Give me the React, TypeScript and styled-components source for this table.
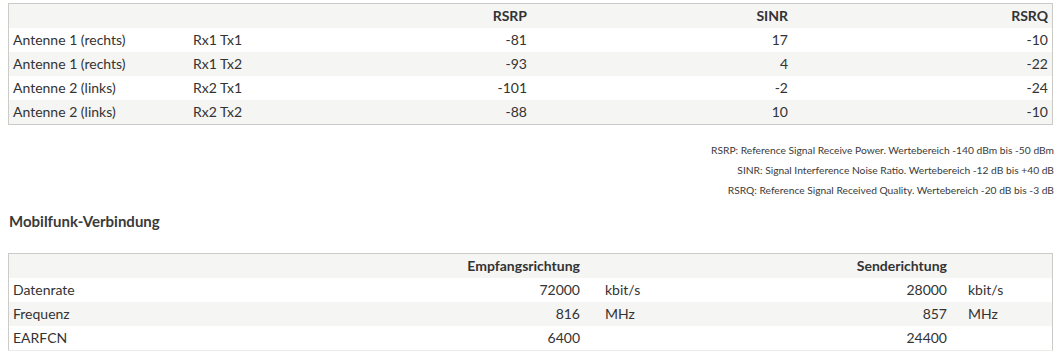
import React from "react";
import styled, { createGlobalStyle } from "styled-components";

const GlobalStyle = createGlobalStyle`
  html, body { margin: 0; padding: 0; background: #ffffff; }
  body {
    font-family: Lato, "Open Sans", "Liberation Sans", sans-serif;
    font-size: 14px;
    color: #333333;
  }
`;

const Page = styled.div`
  width: 1045px;
  padding: 3px 0 0 8px;
`;

const Table = styled.div<{ $softBottom?: boolean }>`
  border: 1px solid #cbcbc8;
  border-bottom-color: ${(p) => (p.$softBottom ? "#ececea" : "#cbcbc8")};
`;

const Row = styled.div<{ $cols: string; $shade?: boolean }>`
  display: grid;
  grid-template-columns: ${(p) => p.$cols};
  height: 24px;
  align-items: center;
  background: ${(p) => (p.$shade ? "#f5f5f3" : "#ffffff")};
`;

const Cell = styled.div<{ $right?: boolean; $head?: boolean; $pl?: number }>`
  padding: 0 4px 0 ${(p) => (p.$pl ?? 4)}px;
  text-align: ${(p) => (p.$right ? "right" : "left")};
  font-weight: ${(p) => (p.$head ? 700 : 400)};
  white-space: nowrap;
  line-height: 24px;
`;

const Notes = styled.div`
  margin-top: 15px;
  display: flex;
  flex-direction: column;
  align-items: flex-end;
  font-size: 10.25px;
  line-height: 20px;
  color: #3a3a3a;
  width: 1046px;
`;

const Heading = styled.h3`
  margin: 11px 0 0 1px;
  font-size: 15px;
  font-weight: 700;
  line-height: 20px;
  color: #3a3a3a;
`;

const Spacer = styled.div`
  height: 22px;
`;

const colsA = "180px 82px 260px 261px 1fr";
const colsB = "291px 284px 116px 251px 1fr";

const rsrpRows = [
  ["Antenne 1 (rechts)", "Rx1 Tx1", "-81", "17", "-10"],
  ["Antenne 1 (rechts)", "Rx1 Tx2", "-93", "4", "-22"],
  ["Antenne 2 (links)", "Rx2 Tx1", "-101", "-2", "-24"],
  ["Antenne 2 (links)", "Rx2 Tx2", "-88", "10", "-10"],
];

const linkRows = [
  ["Datenrate", "72000", "kbit/s", "28000", "kbit/s"],
  ["Frequenz", "816", "MHz", "857", "MHz"],
  ["EARFCN", "6400", "", "24400", ""],
];

export default function App() {
  return (
    <>
      <GlobalStyle />
      <Page>
        <Table>
          <Row $cols={colsA} $shade>
            <Cell />
            <Cell />
            <Cell $right $head>RSRP</Cell>
            <Cell $right $head>SINR</Cell>
            <Cell $right $head>RSRQ</Cell>
          </Row>
          {rsrpRows.map((r, i) => (
            <Row key={i} $cols={colsA} $shade={i % 2 === 1}>
              <Cell>{r[0]}</Cell>
              <Cell>{r[1]}</Cell>
              <Cell $right>{r[2]}</Cell>
              <Cell $right>{r[3]}</Cell>
              <Cell $right>{r[4]}</Cell>
            </Row>
          ))}
        </Table>
        <Notes>
          <div>RSRP: Reference Signal Receive Power. Wertebereich -140 dBm bis -50 dBm</div>
          <div>SINR: Signal Interference Noise Ratio. Wertebereich -12 dB bis +40 dB</div>
          <div>RSRQ: Reference Signal Received Quality. Wertebereich -20 dB bis -3 dB</div>
        </Notes>
        <Heading>Mobilfunk-Verbindung</Heading>
        <Spacer />
        <Table $softBottom>
          <Row $cols={colsB} $shade>
            <Cell />
            <Cell $right $head>Empfangsrichtung</Cell>
            <Cell />
            <Cell $right $head>Senderichtung</Cell>
            <Cell />
          </Row>
          {linkRows.map((r, i) => (
            <Row key={i} $cols={colsB} $shade={i % 2 === 1}>
              <Cell>{r[0]}</Cell>
              <Cell $right>{r[1]}</Cell>
              <Cell $pl={21}>{r[2]}</Cell>
              <Cell $right>{r[3]}</Cell>
              <Cell $pl={17}>{r[4]}</Cell>
            </Row>
          ))}
        </Table>
      </Page>
    </>
  );
}
